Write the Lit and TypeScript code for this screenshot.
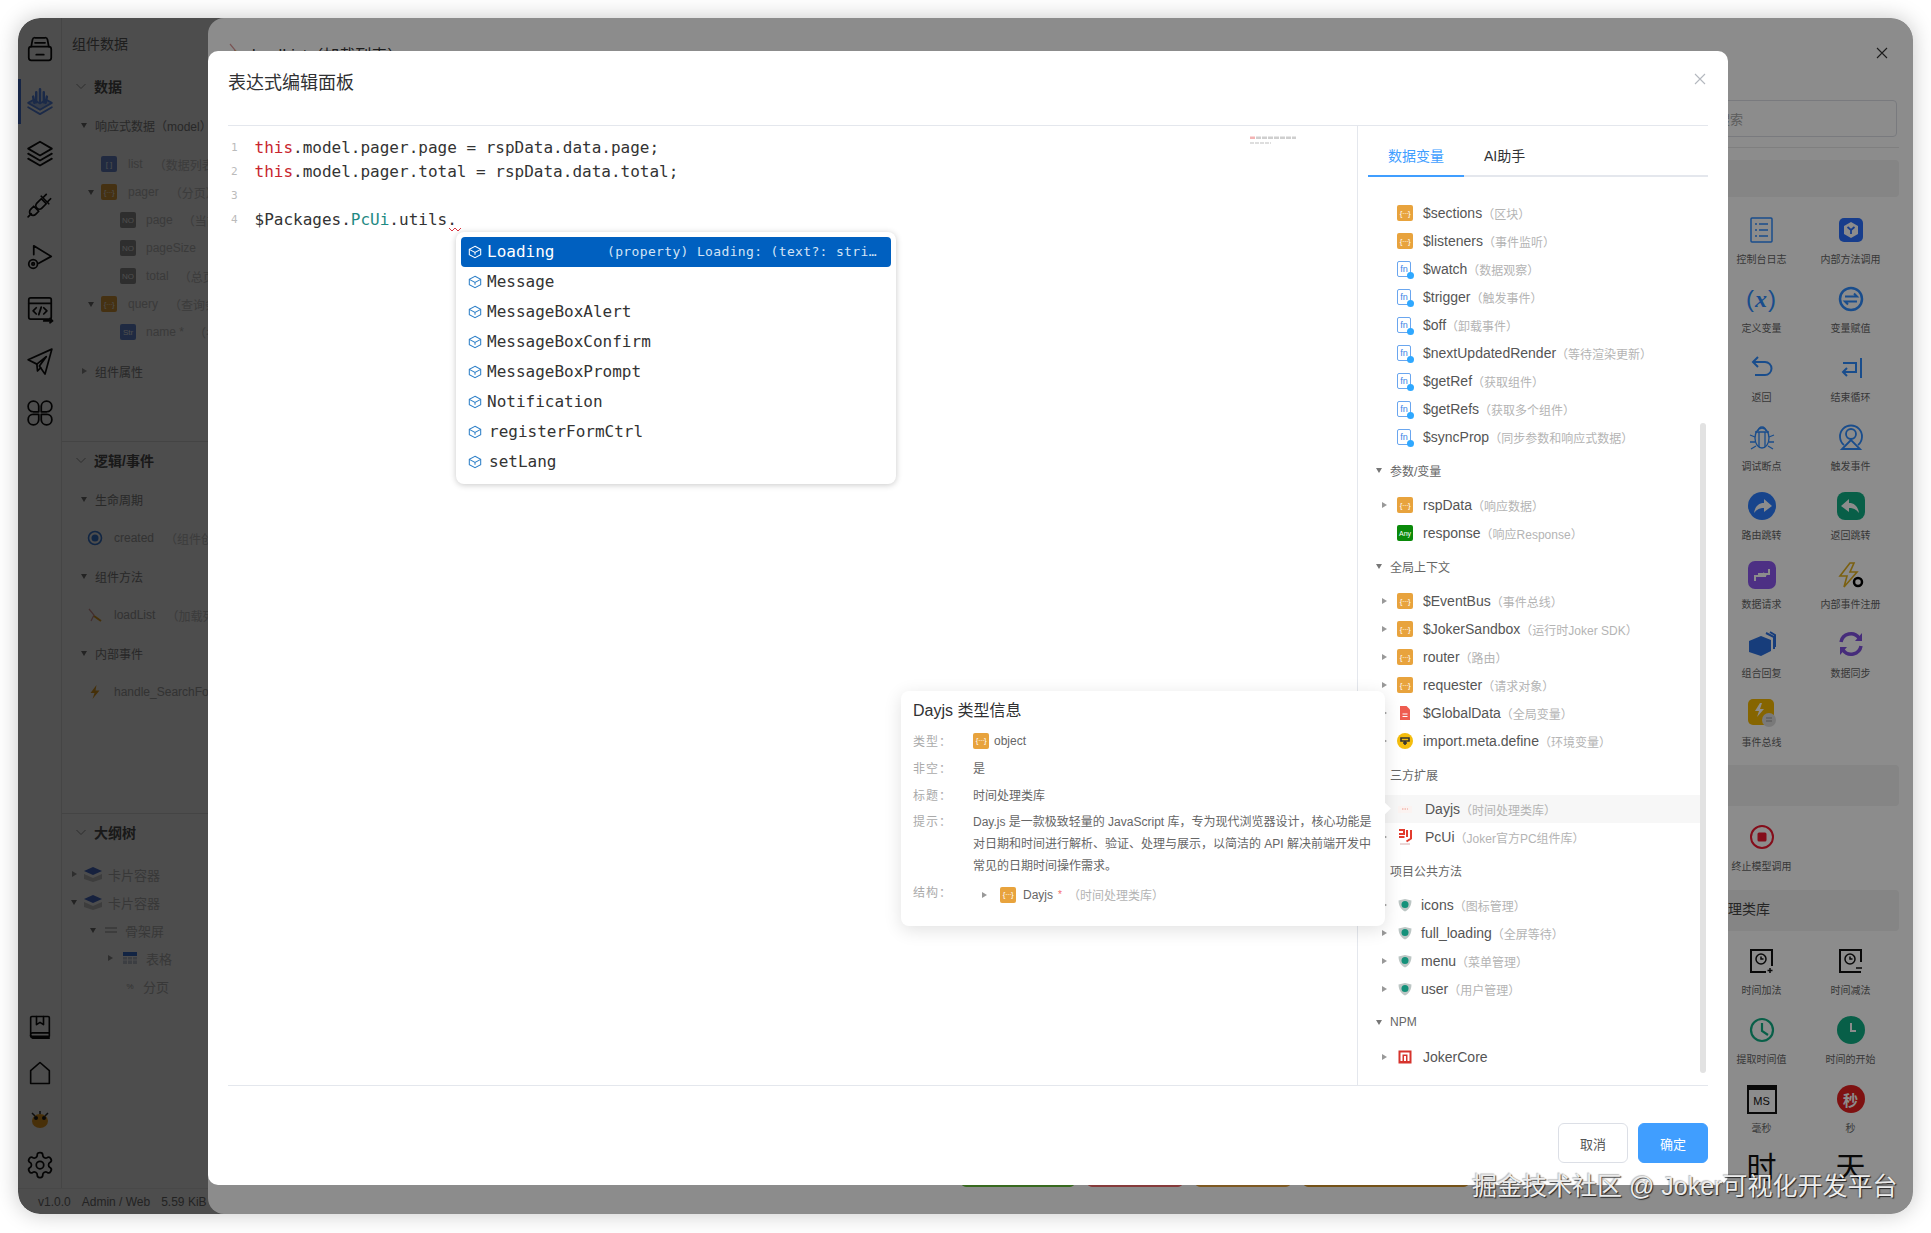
import { LitElement, html, css, svg, nothing } from "lit";
import { customElement } from "lit/decorators.js";

const s = (w: number, body: unknown, cls = "") => html`<svg class=${cls} width=${w} height=${w} viewBox="0 0 24 24" fill="none" stroke="currentColor" stroke-width="1.400" stroke-linecap="round" stroke-linejoin="round">${body}</svg>`;

const RAIL_TOP = [
  s(30, svg`<path d="M5 10 6 4.500A2 2 0 0 1 8 3h8a2 2 0 0 1 2 1.500L19 10"/><path d="M8 7h8"/><path d="M3 12a2 2 0 0 1 2-2h14a2 2 0 0 1 2 2v7a2 2 0 0 1-2 2H5a2 2 0 0 1-2-2z"/><path d="M9 16.500h6"/>`),
  html`<span class="active-ic">${s(30, svg`<path d="M12 2.500v10M9 5v8M15 5v8M6.500 8.500l1 5M17.500 8.500l-1 5" stroke-width="2"/><path d="M2.500 13.500 12 19l9.500-5.500L17 11l-5 3-5-3z" fill="currentColor" fill-opacity=".45"/><path d="M2.500 17 12 22.500 21.500 17"/>`)}</span>`,
  s(30, svg`<path d="M12 3 2.500 8.500 12 14l9.500-5.500z"/><path d="M2.500 12.500 12 18l9.500-5.500"/><path d="M2.500 16.500 12 22l9.500-5.500"/>`),
  s(30, svg`<path d="m13 7 4 4-3.500 3.500a2.800 2.800 0 0 1-4-4zM17 3.500 14.500 6M20.500 7 18 9.500"/><path d="m11 17-4-4-2.500 2.500a2.800 2.800 0 0 0 4 4zM5 19l-2.500 2.500M13 5l6 6"/>`),
  s(30, svg`<path d="M7 10V3l14 8.500L11 17"/><circle cx="6.500" cy="17.500" r="3.500"/><circle cx="6.500" cy="17.500" r="1"/>`),
  s(30, svg`<rect x="3" y="3" width="18" height="17" rx="1.500"/><path d="M3 7.500h18M9 11l-2.500 2.500L9 16M15 11l2.500 2.500L15 16M13 10.500l-2 6M15 21.500h7m-2-2 2 2-2 1.500"/>`),
  s(30, svg`<path d="M21.500 2.500 2.500 11l7 3.500 7.500-6-5.500 7.500 4.500 6.500z"/><path d="m9.500 14.500.5 5.500 2.500-2.500"/>`),
  s(30, svg`<path d="M11 11H6.500A4.250 4.250 0 1 1 11 6.500zM13 11h4.500A4.250 4.250 0 1 0 13 6.500zM11 13H6.500A4.250 4.250 0 1 0 11 17.500zM13 13h4.500A4.250 4.250 0 1 1 13 17.500z"/>`),
];
const RAIL_BOTTOM = [
  s(28, svg`<path d="M4 18V4a1 1 0 0 1 1-1h14a1 1 0 0 1 1 1v16H5.500A1.500 1.500 0 0 1 4 18.500 1.500 1.500 0 0 1 5.500 17H20M4 18.500A2.500 2.500 0 0 0 5.500 21.500H20"/><path d="M9 3v7l3-2 3 2V3"/>`),
  s(28, svg`<path d="M4 21V10l8-7 8 7v11z"/>`),
  html`<svg width="26" height="26" viewBox="0 0 26 26"><ellipse cx="13" cy="15" rx="8" ry="7" fill="#f0a020"/><circle cx="9" cy="12" r="2" fill="#222"/><circle cx="17" cy="12" r="2" fill="#222"/><path d="M5 7 8 10M21 7l-3 3M13 5v3" stroke="#333" stroke-width="1.500"/></svg>`,
  s(30, svg`<path d="M12.220 2h-.440a2 2 0 0 0-2 2v.180a2 2 0 0 1-1 1.730l-.430.250a2 2 0 0 1-2 0l-.150-.080a2 2 0 0 0-2.730.730l-.220.380a2 2 0 0 0 .730 2.730l.150.100a2 2 0 0 1 1 1.720v.510a2 2 0 0 1-1 1.740l-.150.090a2 2 0 0 0-.730 2.730l.220.380a2 2 0 0 0 2.730.730l.150-.080a2 2 0 0 1 2 0l.430.250a2 2 0 0 1 1 1.730V20a2 2 0 0 0 2 2h.440a2 2 0 0 0 2-2v-.180a2 2 0 0 1 1-1.730l.430-.250a2 2 0 0 1 2 0l.150.080a2 2 0 0 0 2.730-.730l.220-.390a2 2 0 0 0-.730-2.730l-.150-.080a2 2 0 0 1-1-1.740v-.500a2 2 0 0 1 1-1.740l.150-.090a2 2 0 0 0 .730-2.730l-.220-.380a2 2 0 0 0-2.730-.730l-.150.080a2 2 0 0 1-2 0l-.430-.250a2 2 0 0 1-1-1.730V4a2 2 0 0 0-2-2z"/><circle cx="12" cy="12" r="3"/>`),
];

const ic = {
  obj: html`<span class="t obj">{···}</span>`,
  list: html`<span class="t lst">[ ]</span>`,
  no: html`<span class="t no">NO</span>`,
  str: html`<span class="t str">Str</span>`,
  any: html`<span class="t any">Any</span>`,
  fn: html`<span class="t fn">fn<i></i></span>`,
  doc: html`<svg class="ti" viewBox="0 0 16 16"><path d="M3 1h6.500L13 4.500V15H3z" fill="#ee5d50"/><path d="M5.500 9h5M5.500 11.500h5" stroke="#fff" stroke-width="1.200"/></svg>`,
  env: html`<svg class="ti" viewBox="0 0 16 16"><circle cx="8" cy="8" r="8" fill="#f4bd0e"/><path d="M4 5h8v3H4zM6 10h4M8 8v4" stroke="#333" stroke-width="1.600" fill="none"/></svg>`,
  day: html`<svg class="ti" viewBox="0 0 16 16"><path d="M1 5h14v7H1z" fill="#fbf3f1"/><path d="M5 8h6" stroke="#ee9a8c" stroke-width="1" stroke-dasharray="1.500 1"/></svg>`,
  pc: html`<svg class="ti" viewBox="0 0 16 16" fill="none" stroke="#e23b2e" stroke-width="2"><path d="M2 1h5v4H2M2 8h5.500M10 1v7M14 1v8.500L9.500 12.500"/><path d="M3 15h10" stroke="#c99" stroke-width=".8"/></svg>`,
  shield: html`<svg class="ti" viewBox="0 0 16 16"><path d="M1.500 3.500 8 2l6.500 1.500c0 5-2.500 9-6.500 11-4-2-6.500-6-6.500-11z" fill="#bcc6c4"/><circle cx="8" cy="7.500" r="3.500" fill="#14917a"/></svg>`,
  core: html`<svg class="ti" viewBox="0 0 16 16"><rect x="1.500" y="1.500" width="13" height="13" fill="#d6332d"/><path d="M4.500 12V4.500h7V12M8 7v5" stroke="#fff" stroke-width="2" fill="none"/></svg>`,
  bolt: html`<svg class="ti" viewBox="0 0 16 16"><path d="M9.500 1 3.500 9h4L5.500 15l7-8.500H8.500z" fill="#e8a020"/></svg>`,
  loop: html`<svg class="ti" viewBox="0 0 16 16"><circle cx="8" cy="8" r="6.500" fill="none" stroke="#3a7ee0" stroke-width="1.600"/><circle cx="8" cy="8" r="3.500" fill="#3a7ee0"/></svg>`,
  fnc: html`<svg class="ti" viewBox="0 0 16 16"><path d="M2 2l5 6-3 6" stroke="#d99" stroke-width="1.200" fill="none"/><path d="M7 9l7 5" stroke="#e8a020" stroke-width="2"/></svg>`,
  card: html`<svg class="ti w" viewBox="0 0 20 16"><path d="M1 5 10 1l9 4-9 4z" fill="#4a70d0"/><path d="M1 8l9 4 9-4v5l-9 3-9-3z" fill="#ccc"/></svg>`,
  skel: html`<svg class="ti" viewBox="0 0 16 16"><path d="M2 6h12M2 10h12" stroke="#999" stroke-width="1"/></svg>`,
  table: html`<svg class="ti" viewBox="0 0 16 16"><rect x="1" y="2" width="14" height="4" fill="#3d78e0"/><path d="M1 7h14v7H1z" fill="#c6cfdc"/><path d="M1 10h14M5.500 7v7M10.500 7v7" stroke="#fff"/></svg>`,
  page: html`<span class="tiny">%</span>`,
};

type Row = [string, unknown, string, string?];

const SYS: Row[] = [
  ["", ic.obj, "$sections", "（区块）"],
  ["", ic.obj, "$listeners", "（事件监听）"],
  ["", ic.fn, "$watch", "（数据观察）"],
  ["", ic.fn, "$trigger", "（触发事件）"],
  ["", ic.fn, "$off", "（卸载事件）"],
  ["", ic.fn, "$nextUpdatedRender", "（等待渲染更新）"],
  ["", ic.fn, "$getRef", "（获取组件）"],
  ["", ic.fn, "$getRefs", "（获取多个组件）"],
  ["", ic.fn, "$syncProp", "（同步参数和响应式数据）"],
];
const PARAMS: Row[] = [["r", ic.obj, "rspData", "（响应数据）"], ["", ic.any, "response", "（响应Response）"]];
const GLOBAL: Row[] = [
  ["r", ic.obj, "$EventBus", "（事件总线）"],
  ["r", ic.obj, "$JokerSandbox", "（运行时Joker SDK）"],
  ["r", ic.obj, "router", "（路由）"],
  ["r", ic.obj, "requester", "（请求对象）"],
  ["r", ic.doc, "$GlobalData", "（全局变量）"],
  ["r", ic.env, "import.meta.define", "（环境变量）"],
];
const COMMON: Row[] = [
  ["r", ic.shield, "icons", "（图标管理）"],
  ["r", ic.shield, "full_loading", "（全屏等待）"],
  ["r", ic.shield, "menu", "（菜单管理）"],
  ["r", ic.shield, "user", "（用户管理）"],
];

const B = "#2f8cff";
const PAL1: [unknown, string][] = [
  [html`<svg width="26" height="28" viewBox="0 0 26 28" fill="none" stroke="${B}" stroke-width="1.500"><rect x="2" y="2" width="21" height="24" rx="1"/><path d="M6 8h2M10 8h9M6 14h2M10 14h9M6 20h2M10 20h9"/></svg>`, "控制台日志"],
  [html`<svg width="26" height="28" viewBox="0 0 26 28"><rect x="1" y="2" width="24" height="24" rx="5" fill="#2a70ff"/><path d="M13 6l7 4v8l-7 4-7-4v-8z" fill="#fff"/><path d="M9.500 11l3.500 3 3.500-3M13 14v4" stroke="#2a70ff" stroke-width="1.800" fill="none"/></svg>`, "内部方法调用"],
  [html`<span class="xv">(<i>x</i>)</span>`, "定义变量"],
  [html`<svg width="28" height="28" viewBox="0 0 28 28" fill="none" stroke="${B}" stroke-width="2.500"><circle cx="14" cy="14" r="11"/><path d="M8 11.500h12l-3-3M20 16.500H8l3 3" stroke-width="2"/></svg>`, "变量赋值"],
  [html`<svg width="26" height="28" viewBox="0 0 26 28" fill="none" stroke="${B}" stroke-width="2"><path d="M9 3 4 8l5 5M4 8h12a6 6 0 0 1 0 13H6"/></svg>`, "返回"],
  [html`<svg width="26" height="28" viewBox="0 0 26 28" fill="none" stroke="${B}" stroke-width="2"><path d="M23 4v20M5 9h13v9H5m4-4-4 4 4 4M5 9"/></svg>`, "结束循环"],
  [html`<svg width="26" height="28" viewBox="0 0 26 28" fill="none" stroke="${B}" stroke-width="1.300"><ellipse cx="13" cy="15" rx="7" ry="10"/><path d="M9 8a4 4 0 0 1 8 0M6 9h14M10 9v15M16 9v15M1 12l5 2M25 12l-5 2M1 19h5M25 19h-5M2 26l5-3M24 26l-5-3"/></svg>`, "调试断点"],
  [html`<svg width="26" height="28" viewBox="0 0 26 28" fill="none" stroke="${B}" stroke-width="1.800"><path d="M6 22A11 11 0 1 1 20 22"/><circle cx="13" cy="11" r="5"/><path d="M13 17 4 26h18z"/></svg>`, "触发事件"],
  [html`<svg width="28" height="28" viewBox="0 0 28 28"><circle cx="14" cy="14" r="14" fill="#2a7dff"/><path d="M16 7l8 7-8 6v-4c-4 0-7 1-10 5 1-6 4-10 10-10z" fill="#fff"/></svg>`, "路由跳转"],
  [html`<svg width="28" height="28" viewBox="0 0 28 28"><rect width="28" height="28" rx="8" fill="#0fae84"/><path d="M12 7 4 14l8 6v-4c4 0 7 1 10 5-1-6-4-10-10-10z" fill="#fff"/></svg>`, "返回跳转"],
  [html`<svg width="28" height="28" viewBox="0 0 28 28"><rect width="28" height="28" rx="7" fill="#8c58f0"/><path d="M7 20v-5h11m0 0-3-3M21 8v5H10" stroke="#fff" stroke-width="2" fill="none"/></svg>`, "数据请求"],
  [html`<svg width="30" height="28" viewBox="0 0 30 28"><path d="M14 2 4 15h7l-3 11 13-15h-7l4-9z" fill="none" stroke="#e0b020" stroke-width="1.600"/><circle cx="22" cy="21" r="4" fill="none" stroke="#000" stroke-width="2.500"/></svg>`, "内部事件注册"],
  [html`<svg width="30" height="28" viewBox="0 0 30 28"><path d="M2 11 14 6l10 4v11l-10 5-12-4z" fill="#2a70e0"/><path d="M19 3l8 4v12M23 2l5 3v12" fill="none" stroke="#2a70e0" stroke-width="2"/></svg>`, "组合回复"],
  [html`<svg width="28" height="28" viewBox="0 0 28 28" fill="none" stroke="#8050e0" stroke-width="3.500"><path d="M4 12a10 10 0 0 1 18-4M24 16a10 10 0 0 1-18 4"/><path d="M25 3v8h-7M3 25v-8h7" stroke-width="0" fill="#8050e0"/></svg>`, "数据同步"],
  [html`<svg width="28" height="28" viewBox="0 0 28 28"><rect width="26" height="26" rx="5" fill="#f5b800"/><path d="M12 4 7 12h4l-2 6 7-8h-4l2-6z" fill="#fff"/><circle cx="21" cy="21" r="7" fill="#ddd"/><path d="M18 19h6M18 22h6" stroke="#999"/></svg>`, "事件总线"],
];
const PAL3: [unknown, string][] = [
  [html`<svg width="26" height="26" viewBox="0 0 26 26" fill="none" stroke="#111" stroke-width="2"><path d="M23 18V2H2v22h15"/><circle cx="12" cy="11" r="5" stroke-width="1.500"/><path d="M12 8.500V11h2.500M21 20v5M18.500 22.500h5" stroke-width="1.500"/></svg>`, "时间加法"],
  [html`<svg width="26" height="26" viewBox="0 0 26 26" fill="none" stroke="#111" stroke-width="2"><path d="M23 14V2H2v22h21"/><circle cx="12" cy="11" r="5" stroke-width="1.500"/><path d="M12 8.500V11h2.500M18 20h6" stroke-width="1.500"/></svg>`, "时间减法"],
  [html`<svg width="28" height="28" viewBox="0 0 28 28" fill="none" stroke="#0fae84" stroke-width="2.200"><circle cx="14" cy="14" r="11"/><path d="M14 7v8l6 4"/></svg>`, "提取时间值"],
  [html`<svg width="28" height="28" viewBox="0 0 28 28"><circle cx="14" cy="14" r="14" fill="#0fae84"/><path d="M14 7v8h5" stroke="#fff" stroke-width="2" fill="none"/></svg>`, "时间的开始"],
  [html`<span class="ms"><b>MS</b></span>`, "毫秒"],
  [html`<span class="sec">秒</span>`, "秒"],
  [html`<span class="big">时</span>`, ""],
  [html`<span class="big">天</span>`, ""],
];

@customElement("app-root")
export class AppRoot extends LitElement {
  static styles = css`
    :host { display: block; width: 1931px; height: 1233px; background: #fff; overflow: hidden; position: relative;
      font-family: "Liberation Sans", "Noto Sans CJK SC", sans-serif; color: #333; }
    .window { position: absolute; left: 18px; top: 18px; width: 1895px; height: 1196px; background: #fff; border-radius: 22px; box-shadow: 0 0 22px rgba(0,0,0,.22); }
    .clip { position: absolute; inset: 0; border-radius: 22px; overflow: hidden; }
    .left { height: 100%; display: flex; flex-direction: column; width: 220px; }
    .upper { flex: 1; display: flex; min-height: 0; }
    .rail { width: 44px; flex: none; border-right: 1px solid #e8e8e8; display: flex; flex-direction: column; padding: 5px 0 0 1px; box-sizing: border-box; color: #111; position: relative; }
    .rail-item { height: 52px; flex: none; display: flex; align-items: center; justify-content: center; }
    .rail-b { height: 46px; flex: none; display: flex; align-items: center; justify-content: center; }
    .rail-sp { flex: 1; }
    .rail-bar { position: absolute; left: 0; top: 61px; width: 3px; height: 45px; background: #4a7ce8; }
    .active-ic { color: #5b8cf0; display: flex; }
    .panel { flex: 1; min-width: 0; overflow: hidden; font-size: 12px; display: flex; flex-direction: column; }
    .phead { height: 49px; flex: none; display: flex; align-items: center; padding-left: 10px; font-size: 14px; color: #666; white-space: nowrap; }
    .sec1 { height: 374px; flex: none; border-bottom: 1px solid #e4e4e4; box-sizing: content-box; }
    .sec2 { height: 371px; flex: none; border-bottom: 1px solid #e4e4e4; }
    .stitle { height: 38px; box-sizing: border-box; display: flex; align-items: center; padding-left: 13px; font-size: 14px; font-weight: 700; color: #555; gap: 7px; white-space: nowrap; }
    .stitle.up { height: 37px; padding-bottom: 1px; }
    .stitle svg { color: #999; flex: none; }
    .lr { height: 28px; display: flex; align-items: center; white-space: nowrap; color: #c4c4c4; }
    .lr .hint { color: #c8c8c8; }
    .lgroup { color: #888; margin-top: 6px; padding-left: 18px; gap: 7px; }
    .stitle + .lgroup { margin-top: 6px; }
    .after { margin-top: 11px; }
    .evleaf { padding-left: 25px; gap: 11px; margin-bottom: 10px; color: #aaa; }
    .evgroup { margin-top: 0; }
    .l2 { padding-left: 25px; gap: 6px; }
    .l2 .ni { gap: 11px; display: flex; align-items: center; }
    .l2np { padding-left: 39px; gap: 11px; margin-top: 11px; }
    .l3 { padding-left: 58px; gap: 10px; }
    .o1, .o2, .o3, .o3b { color: #bbb; font-size: 13px; }
    .o1 { padding-left: 8px; gap: 5px; }
    .o2 { padding-left: 27px; gap: 6px; }
    .o3 { padding-left: 44px; gap: 8px; }
    .o3b { padding-left: 60px; gap: 5px; }
    .otree { margin-top: 9px; }
    .status { height: 25px; flex: none; border-top: 1px solid #eee; display: flex; align-items: center; gap: 11px; padding-left: 20px; font-size: 12px; color: #777; white-space: nowrap; }

    .car { flex: none; width: 8px; height: 8px; display: inline-flex; align-items: center; justify-content: center; }
    .car::before { content: ""; border-style: solid; border-color: transparent; }
    .car.r::before { border-width: 3.500px 0 3.500px 5px; border-left-color: #999; }
    .car.d::before { border-width: 5px 3.500px 0 3.500px; border-top-color: #777; }
    .car.n::before { display: none; }

    .t { flex: none; width: 16px; height: 16px; border-radius: 2px; display: inline-flex; align-items: center; justify-content: center; font-size: 8px; color: #fff; overflow: hidden; position: relative; font-family: "Liberation Sans", sans-serif; }
    .obj { background: #e8a33d; letter-spacing: -.6px; }
    .lst { background: #6f8fd8; }
    .no { background: #999; }
    .str { background: #6a8fdc; }
    .any { background: #0a8a0a; font-size: 7px; }
    .fn { background: #fff; border: 1px solid #6aa6ef; color: #3a86e6; width: 12px; height: 14px; margin-right: 2px; margin-bottom: 1px; font-size: 9px; overflow: visible; box-sizing: content-box; }
    .fn i { position: absolute; right: -4px; bottom: -3px; width: 7px; height: 7px; border-radius: 50%; background: #2fa8ff; }
    .ti { flex: none; width: 16px; height: 16px; display: block; }
    .ti.w { width: 20px; }
    .tiny { font-size: 8px; width: 16px; text-align: center; color: #aaa; }

    .mask { position: absolute; inset: 0; background: rgba(0,0,0,.45); border-radius: 22px; }
    .drawer { position: absolute; left: 190px; top: 0; right: 0; bottom: 0; background: #fff; border-radius: 16px 22px 22px 16px; overflow: hidden; display: flex; }
    .dmain { flex: 1; min-width: 0; display: flex; flex-direction: column; }
    .dhead { height: 71px; padding: 24px 0 0 20px; box-sizing: border-box; display: flex; gap: 8px; align-items: flex-start; font-size: 16px; color: #333; border-bottom: 1px solid #eee; }
    .dsp { flex: 1; }
    .strips { display: flex; gap: 12px; padding: 0 0 27px 753px; }
    .strips i { display: block; width: 96px; height: 30px; border-radius: 5px; }
    .strips .st-g { width: 114px; background: #67c23a; }
    .strips .st-r { background: #f56c6c; }
    .strips .st-o { background: #e6a23c; }
    .strips .st-b { width: 166px; background: #d6962c; }
    .palette { width: 219px; flex: none; position: relative; margin-right: 14px; padding-top: 82px; box-sizing: border-box; }
    .close { position: absolute; right: 9px; top: 27px; color: #333; display: flex; }
    .search { height: 37px; border: 1px solid #dcdfe6; border-radius: 4px; font-size: 13px; color: #aaa; display: flex; align-items: center; padding-left: 36px; margin-right: 2px; box-sizing: border-box; }
    .pdiv { height: 1px; background: #e8e8e8; margin-top: 10px; }
    .band { height: 37px; background: #f3f3f3; margin-top: 12px; border-radius: 4px; font-size: 14px; color: #444; display: flex; align-items: center; padding-left: 6px; box-sizing: border-box; }
    .band.b2 { height: 41px; margin-top: -2px; }
    .band.b3 { height: 41px; margin-top: -1px; padding-bottom: 6px; }
    .grid { display: grid; grid-template-columns: 89px 89px; padding-left: 37px; margin-top: 18px; }
    .grid.g2 { margin-top: 16px; }
    .grid.g3 { margin-top: 15px; }
    .pi { height: 69px; display: flex; flex-direction: column; align-items: center; white-space: nowrap; }
    .pic { height: 30px; display: flex; align-items: center; justify-content: center; }
    .pl { margin-top: 7px; font-size: 10px; line-height: 16px; color: #666; }
    .xv { color: #2f8cff; font-size: 24px; font-family: "Liberation Sans", sans-serif; line-height: 28px; letter-spacing: 1px; }
    .xv i { font-weight: 700; font-family: "Liberation Serif", serif; }
    .ms { width: 26px; height: 22px; border: 2px solid #111; border-top-width: 5px; display: flex; align-items: center; justify-content: center; font-size: 11px; color: #111; }
    .ms b { font-weight: 400; }
    .sec { width: 28px; height: 28px; border-radius: 50%; background: #e62020; color: #fff; font-size: 15px; display: flex; align-items: center; justify-content: center; font-weight: 700; }
    .big { font-size: 30px; color: #111; line-height: 30px; }

    .modal { position: absolute; left: 190px; top: 33px; width: 1520px; height: 1134px; background: #fff; border-radius: 10px; display: flex; flex-direction: column; padding: 0 20px; box-sizing: border-box; }
    .mhead { height: 75px; flex: none; position: relative; padding-top: 20px; box-sizing: border-box; font-size: 18px; line-height: 24px; color: #303133; border-bottom: 1.500px solid #e4e7ed; }
    .mclose { position: absolute; right: 0; top: 20px; color: #b4b8bf; display: flex; }
    .mbody { flex: 1; min-height: 0; display: flex; border-bottom: 1px solid #e4e7ed; }
    .editor { flex: 1; min-width: 0; border-right: 1px solid #e4e7ed; padding-top: 10px; position: relative; font-family: "DejaVu Sans Mono", monospace; font-size: 16px; }
    .cl { height: 24px; line-height: 24px; display: flex; white-space: pre; color: #333; }
    .ln { width: 26.500px; flex: none; padding-left: 3px; box-sizing: border-box; color: #bbb; font-size: 11px; }
    .kw { color: #c8262e; }
    .ty { color: #1f8a84; }
    .squig { position: absolute; left: 221px; top: 101px; }
    .mini { position: absolute; left: 1022px; top: 9px; }
    .sug { position: absolute; left: 228px; top: 106px; width: 440px; height: 252px; box-sizing: border-box; padding: 5px; background: #fff; border-radius: 8px; box-shadow: 0 1px 6px rgba(0,0,0,.22); }
    .si { height: 30px; display: flex; align-items: center; padding-left: 7px; color: #333; border-radius: 4px; line-height: 30px; gap: 5px; }
    .si svg { color: #2f80c8; flex: none; }
    .si.sel { background: #0060c0; color: #fff; }
    .si.sel svg { color: #fff; }
    .si .det { margin-left: auto; padding-right: 13px; font-size: 13px; width: 271px; box-sizing: content-box; color: #d4e4f6; letter-spacing: .35px; white-space: nowrap; }
    .si.off { gap: 7px; }
    .side { width: 350px; flex: none; padding-left: 10px; box-sizing: border-box; position: relative; }
    .tabs { height: 51px; border-bottom: 2px solid #e4e7ed; display: flex; box-sizing: border-box; font-size: 14px; }
    .tab { padding: 0 20px; width: 96px; box-sizing: border-box; height: 51px; line-height: 61px; white-space: nowrap; color: #303133; }
    .tab.on { color: #409eff; border-bottom: 2px solid #409eff; }
    .tree { padding-top: 22px; }
    .row { height: 28px; display: flex; align-items: center; white-space: nowrap; padding-left: 12px; font-size: 14px; color: #555; }
    .row .car { margin-right: 8px; width: 9px; }
    .row .ti, .row .t { margin-right: 10px; }
    .row .fn { margin-right: 12px; }
    .hint { font-size: 12px; color: #b4b4b4; }
    .wide .ti { margin-right: 12px; }
    .narrow .ti { margin-right: 8px; }
    .gr { height: 28px; margin: 6px 0; display: flex; align-items: center; padding: 0 0 2px 7px; box-sizing: border-box; gap: 7px; font-size: 12px; color: #666; white-space: nowrap; }
    .gr .car { width: 8px; }
    .gr.plain { padding-left: 22px; }
    .hov { background: #f7f7f7; margin-right: 8px; }
    .scroll { position: absolute; right: 2px; top: 297px; width: 6px; height: 650px; background: #e2e2e2; border-radius: 3px; }
    .mfoot { height: 99px; flex: none; display: flex; justify-content: flex-end; gap: 10px; padding-top: 37px; box-sizing: border-box; }
    .btn { width: 70px; height: 40px; border-radius: 6px; border: 1px solid #dcdfe6; background: #fff; font-size: 13px; color: #555; display: flex; align-items: center; justify-content: center; box-sizing: border-box; }
    .btn.pri { background: #409eff; border-color: #409eff; color: #fff; }
    .tip { position: absolute; left: 693px; top: 640px; width: 484px; height: 235px; background: #fff; border-radius: 8px; box-shadow: 0 4px 18px rgba(0,0,0,.12); padding: 9px 12px; box-sizing: border-box; }
    .tip::after { content: ""; position: absolute; right: -4px; top: 113px; width: 9px; height: 9px; background: #fff; transform: rotate(45deg); }
    .tt { font-size: 16px; line-height: 22px; color: #303133; margin-bottom: 5px; white-space: nowrap; }
    .kv { display: flex; font-size: 12px; min-height: 27px; align-items: center; color: #666; }
    .k { width: 60px; flex: none; color: #aaa; letter-spacing: 1px; }
    .v { display: flex; align-items: center; gap: 5px; white-space: nowrap; }
    .kv.top { align-items: flex-start; margin-top: 3px; }
    .kv.top .k { line-height: 22px; }
    .hl { line-height: 22px; white-space: nowrap; }
    .kv.st { margin-top: 5px; align-items: flex-start; }
    .kv.st .k { line-height: 22px; }
    .kv.st .v { margin: 4px 0 0 7px; gap: 0; font-size: 12px; }
    .kv.st .t { margin: 0 7px 0 12px; }
    .star { color: #f56c6c; margin: 0 6px 0 5px; font-size: 10px; }
    .wm { position: absolute; left: 1472px; top: 1170px; font-size: 25px; line-height: 32px; color: #ececec; white-space: nowrap; text-shadow: 1px 1px 1px rgba(0,0,0,.75), -1px -1px 1px rgba(0,0,0,.25); font-family: "Liberation Sans", "Noto Sans CJK SC", sans-serif; }
  `;

  private chev() {
    return html`<svg width="12" height="12" viewBox="0 0 12 12" fill="none" stroke="currentColor" stroke-width="1"><path d="M1.500 4 6 8.500 10.500 4"/></svg>`;
  }
  private car(k: string) { return html`<span class="car ${k}"></span>`; }
  private row(r: Row, cls = "") {
    return html`<div class="row ${cls}">${this.car(r[0] || "n")}${r[1]}<span>${r[2]}</span><span class="hint">${r[3] ?? nothing}</span></div>`;
  }
  private gr(k: string, t: string) {
    return html`<div class="gr ${k ? "" : "plain"}">${k ? this.car(k) : nothing}<span>${t}</span></div>`;
  }
  private pal(items: [unknown, string][], cls = "") {
    return html`<div class="grid ${cls}">${items.map(([i, l]) => html`<div class="pi"><div class="pic">${i}</div><div class="pl">${l}</div></div>`)}</div>`;
  }
  private cube() {
    return html`<svg width="14" height="14" viewBox="0 0 16 16" fill="none" stroke="currentColor" stroke-width="1.200"><path d="M8 1.500 14.500 5v6L8 14.500 1.500 11V5z"/><path d="M1.500 5 8 8.500 14.500 5M8 8.500V11"/></svg>`;
  }

  render() {
    const words = ["Loading", "Message", "MessageBoxAlert", "MessageBoxConfirm", "MessageBoxPrompt", "Notification", "registerFormCtrl", "setLang"];
    const x = html`<svg width="16" height="16" viewBox="0 0 16 16" fill="none" stroke="currentColor" stroke-width="1.100"><path d="m3 3 10 10M13 3 3 13"/></svg>`;
    return html`
      <div class="window">
        <div class="clip">
          <div class="left">
            <div class="upper">
              <nav class="rail">
                <span class="rail-bar"></span>
                ${RAIL_TOP.map((i) => html`<div class="rail-item">${i}</div>`)}
                <div class="rail-sp"></div>
                ${RAIL_BOTTOM.map((i) => html`<div class="rail-b">${i}</div>`)}
              </nav>
              <div class="panel">
                <div class="phead">组件数据</div>
                <section class="sec1">
                  <div class="stitle">${this.chev()}<span>数据</span></div>
                  <div class="lr lgroup">${this.car("d")}响应式数据（model）</div>
                  <div class="lr l2np">${ic.list}list<span class="hint">（数据列表）</span></div>
                  <div class="lr l2">${this.car("d")}<span class="ni">${ic.obj}pager<span class="hint">（分页）</span></span></div>
                  <div class="lr l3">${ic.no}page<span class="hint">（当前页）</span></div>
                  <div class="lr l3">${ic.no}pageSize<span class="hint">（每页）</span></div>
                  <div class="lr l3">${ic.no}total<span class="hint">（总页数）</span></div>
                  <div class="lr l2">${this.car("d")}<span class="ni">${ic.obj}query<span class="hint">（查询条件）</span></span></div>
                  <div class="lr l3">${ic.str}name *<span class="hint">（名称）</span></div>
                  <div class="lr lgroup after">${this.car("r")}组件属性</div>
                </section>
                <section class="sec2">
                  <div class="stitle up">${this.chev()}<span>逻辑/事件</span></div>
                  <div class="lr lgroup evgroup">${this.car("d")}生命周期</div>
                  <div class="lr evleaf after">${ic.loop}created<span class="hint">（组件创建）</span></div>
                  <div class="lr lgroup evgroup">${this.car("d")}组件方法</div>
                  <div class="lr evleaf after">${ic.fnc}loadList<span class="hint">（加载列表）</span></div>
                  <div class="lr lgroup evgroup">${this.car("d")}内部事件</div>
                  <div class="lr evleaf after">${ic.bolt}handle_SearchForm</div>
                </section>
                <section>
                  <div class="stitle up">${this.chev()}<span>大纲树</span></div>
                  <div class="otree">
                    <div class="lr o1">${this.car("r")}${ic.card}卡片容器</div>
                    <div class="lr o1">${this.car("d")}${ic.card}卡片容器</div>
                    <div class="lr o2">${this.car("d")}${ic.skel}骨架屏</div>
                    <div class="lr o3">${this.car("r")}${ic.table}表格</div>
                    <div class="lr o3b">${ic.page}分页</div>
                  </div>
                </section>
              </div>
            </div>
            <footer class="status"><span>v1.0.0</span><span>Admin / Web</span><span>5.59 KiB</span></footer>
          </div>
          <div class="mask"></div>
          <aside class="drawer">
            <div class="dmain">
              <div class="dhead">${ic.fnc}<span>loadList（加载列表）</span></div>
              <div class="dsp"></div>
              <div class="strips"><i class="st-g"></i><i class="st-r"></i><i class="st-o"></i><i class="st-b"></i></div>
            </div>
            <div class="palette">
              <div class="close">${x}</div>
              <div class="search">搜索</div>
              <div class="pdiv"></div>
              <div class="band"></div>
              ${this.pal(PAL1)}
              <div class="band b2"></div>
              ${this.pal([[html`<svg width="28" height="28" viewBox="0 0 28 28" fill="none"><circle cx="14" cy="14" r="11" stroke="#f01830" stroke-width="2"/><rect x="9.500" y="9.500" width="9" height="9" rx="1.500" fill="#f01830"/></svg>`, "终止模型调用"]], "g2")}
              <div class="band b3">时间处理类库</div>
              ${this.pal(PAL3, "g3")}
            </div>
          </aside>
          <div class="mask"></div>
        </div>

        <div class="modal">
          <header class="mhead">表达式编辑面板<span class="mclose">${x}</span></header>
          <div class="mbody">
            <div class="editor">
              <div class="cl"><span class="ln">1</span><span><span class="kw">this</span>.model.pager.page = rspData.data.page;</span></div>
              <div class="cl"><span class="ln">2</span><span><span class="kw">this</span>.model.pager.total = rspData.data.total;</span></div>
              <div class="cl"><span class="ln">3</span></div>
              <div class="cl"><span class="ln">4</span><span>$Packages.<span class="ty">PcUi</span>.utils.</span></div>
              <svg class="squig" width="12" height="5" viewBox="0 0 12 5" fill="none" stroke="#d9333f" stroke-width="1"><path d="M0 1 3 4 6 1 9 4 12 1"/></svg>
              <svg class="mini" width="46" height="10" viewBox="0 0 46 10"><rect x="0" y="1.500" width="5" height="2.500" fill="#f3b4b4"/><path d="M6 2.750h40" stroke="#cfcfcf" stroke-width="2.500" stroke-dasharray="5 1"/><path d="M0 8h21" stroke="#d4d4d4" stroke-width="1.500" stroke-dasharray="4 1"/></svg>
              <div class="sug">
                ${words.map((w, i) => html`<div class="si ${i === 0 ? "sel" : ""} ${i >= 6 ? "off" : ""}">${this.cube()}<span>${w}</span>${i === 0 ? html`<span class="det">(property) Loading: (text?: stri…</span>` : nothing}</div>`)}
              </div>
            </div>
            <div class="side">
              <div class="tabs"><div class="tab on">数据变量</div><div class="tab">AI助手</div></div>
              <div class="tree">
                ${SYS.map((r) => this.row(r))}
                ${this.gr("d", "参数/变量")}
                ${PARAMS.map((r) => this.row(r))}
                ${this.gr("d", "全局上下文")}
                ${GLOBAL.map((r) => this.row(r))}
                ${this.gr("", "三方扩展")}
                ${this.row(["r", ic.day, "Dayjs", "（时间处理类库）"], "wide hov")}
                ${this.row(["r", ic.pc, "PcUi", "（Joker官方PC组件库）"], "wide")}
                ${this.gr("", "项目公共方法")}
                ${COMMON.map((r) => this.row(r, "narrow"))}
                ${this.gr("d", "NPM")}
                ${this.row(["r", ic.core, "JokerCore"])}
              </div>
              <div class="scroll"></div>
            </div>
          </div>
          <footer class="mfoot"><div class="btn">取消</div><div class="btn pri">确定</div></footer>
          <div class="tip">
            <div class="tt">Dayjs 类型信息</div>
            <div class="kv"><span class="k">类型：</span><span class="v">${ic.obj}object</span></div>
            <div class="kv"><span class="k">非空：</span><span class="v">是</span></div>
            <div class="kv"><span class="k">标题：</span><span class="v">时间处理类库</span></div>
            <div class="kv top"><span class="k">提示：</span><div>
              <div class="hl">Day.js 是一款极致轻量的 JavaScript 库，专为现代浏览器设计，核心功能是</div>
              <div class="hl">对日期和时间进行解析、验证、处理与展示，以简洁的 API 解决前端开发中</div>
              <div class="hl">常见的日期时间操作需求。</div>
            </div></div>
            <div class="kv st"><span class="k">结构：</span><span class="v">${this.car("r")}${ic.obj}Dayjs<span class="star">*</span><span class="hint">（时间处理类库）</span></span></div>
          </div>
        </div>
      </div>
      <div class="wm">掘金技术社区 @ Joker可视化开发平台</div>
    `;
  }
}
